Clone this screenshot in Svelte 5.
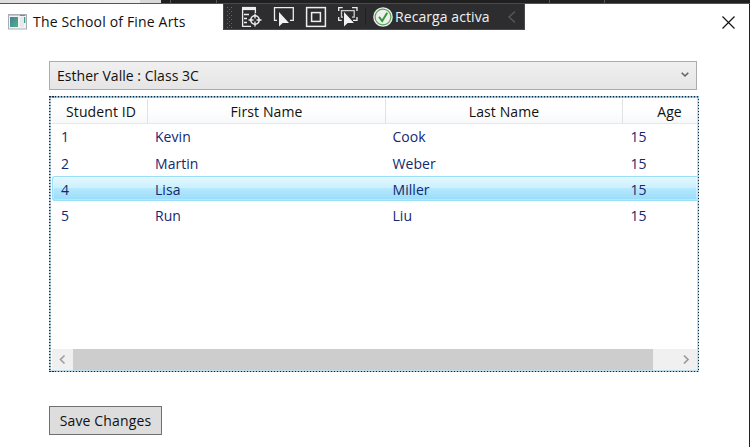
<script>
  const students = [
    { id: 1, first: 'Kevin', last: 'Cook', age: 15 },
    { id: 2, first: 'Martin', last: 'Weber', age: 15 },
    { id: 4, first: 'Lisa', last: 'Miller', age: 15 },
    { id: 5, first: 'Run', last: 'Liu', age: 15 }
  ];
  let selected = $state(4);
</script>

<div class="screen">
  <div class="backdrop"><i class="pale"></i><i class="pale2"></i><i class="tick a"></i><i class="tick b"></i><i class="tick c"></i><i class="tick d"></i></div>
  <main class="window">
    <header class="titlebar">
      <svg class="app" width="19" height="16" viewBox="0 0 19 16">
        <defs><linearGradient id="g" x2="1" y2="1"><stop stop-color="#437fa0" /><stop offset="1" stop-color="#55b080" /></linearGradient></defs>
        <rect x=".5" y=".5" width="18" height="14.5" fill="#f1f3f5" stroke="#a9adb5" />
        <path d="M1 1.5h17" stroke="#c5c8d0" /><path d="M12 1.5h5" stroke="#7b8494" />
        <rect x="2" y="3" width="8" height="10" fill="url(#g)" />
        <rect x="12" y="3" width="4" height="10" fill="#e5e9ed" /><rect x="16" y="3" width="1.3" height="6" fill="#3d9d8f" />
      </svg>
      <h1>The School of Fine Arts</h1>
      <svg class="close" width="13" height="13" viewBox="0 0 13 13"><path d="M.5.5l12 12M12.5.5l-12 12" stroke="#111" stroke-width="1.15" /></svg>
    </header>

    <section class="content">
      <button class="combo"><span>Esther Valle : Class 3C</span>
        <svg width="8" height="6" viewBox="0 0 8 6"><path d="M.7.8L4 4l3.3-3.2" fill="none" stroke="#606060" stroke-width="1.6" /></svg>
      </button>
      <div class="list">
        <div class="inner">
          <div class="row head"><span class="sid">Student ID</span><span class="fn">First Name</span><span class="ln">Last Name</span><span class="age">Age</span></div>
          <div class="rows">
            {#each students as s}
              <!-- svelte-ignore a11y_click_events_have_key_events, a11y_no_static_element_interactions -->
              <div class="row item" class:selected={s.id === selected} onclick={() => (selected = s.id)}>
                <span class="num">{s.id}</span><span>{s.first}</span><span>{s.last}</span><span class="num">{s.age}</span>
              </div>
            {/each}
          </div>
          <div class="scroll">
            <svg width="21" height="21" viewBox="0 0 21 21"><path d="M12.5 6.5l-4 4 4 4" fill="none" stroke="#a0a0a0" stroke-width="1.7" /></svg>
            <div class="thumb"></div>
            <svg width="21" height="21" viewBox="0 0 21 21"><path d="M8 6.5l4 4-4 4" fill="none" stroke="#999" stroke-width="1.7" /></svg>
          </div>
        </div>
      </div>
      <button class="save"><span>Save Changes</span></button>
    </section>
  </main>

  <aside class="debugbar">
    <svg width="302" height="27" viewBox="0 0 302 27" fill="none">
      <defs><pattern id="grip" width="4" height="4" patternUnits="userSpaceOnUse"><rect width="1" height="1" fill="#68686a" /><rect x="2" y="2" width="1" height="1" fill="#68686a" /></pattern></defs>
      <rect x="4" y="3" width="6" height="22" fill="url(#grip)" />
      <g stroke="#eeeeee" stroke-width="1.3">
        <path d="M19.6 5v18.4H28M32.4 5v5" /><path d="M19 5.5h14" stroke-width="3.2" />
        <path d="M21 11.5h5M21 15.5h3M21 19.5h3" />
        <circle cx="32" cy="17" r="4.2" stroke-width="1.6" /><path d="M32 10.5v5M32 18.5v5M25.5 17h5M33.5 17h5" />
        <path d="M54 17.3h-2.5V4.6h18.8v12.7H67" />
        <rect x="83.6" y="4.6" width="18.8" height="18.8" stroke-width="1.5" /><rect x="88.6" y="9.6" width="8.8" height="8.8" stroke-width="1.5" />
        <path d="M115.7 8V4.6h4M129 4.6h5V8M115.7 14v3.4h3M130 17.4h4V14" />
        <path d="M120 14.2h-1.5V7.6h12.7v6.6H129" stroke="#ccc" />
      </g>
      <path d="M56 9v14.5l3.7-3.6h6.3z" fill="#f1f1f1" /><path d="M121 9v14.5l3.7-3.6h6.3z" fill="#f1f1f1" />
      <path d="M142.5 5v17" stroke="#202022" />
      <circle cx="160" cy="14" r="9.8" fill="#eeeeee" /><circle cx="160" cy="14" r="7.9" stroke="#56a652" stroke-width="1.2" />
      <path d="M156 13.8l3.2 4.2 5-8.3" stroke="#36983b" stroke-width="2" />
      <path d="M292 8.5l-6 5.5 6 5.5" stroke="#5b5b5d" stroke-width="1.3" />
    </svg>
    <span>Recarga activa</span>
  </aside>
</div>

<style>
  :global(body) { margin: 0; background: #fff; overflow: hidden; }
  * { box-sizing: border-box; }
  .screen { position: relative; width: 750px; height: 447px; display: flex; flex-direction: column; font: 14px/20px "Open Sans", "Noto Sans", sans-serif; color: #111; background: #222224; }
  .backdrop { display: flex; height: 4px; background: #202021; border-bottom: 1px solid #555; position: relative; }
  .pale { width: 140px; background: linear-gradient(90deg, #ddd, #eee); }
  .pale2 { width: 21px; background: #d8d8d8; }
  .tick { position: absolute; top: 0; width: 1px; height: 3px; background: #555; }
  .a { left: 170px; } .b { left: 216px; } .c { left: 549px; } .d { left: 604px; }
  .window { width: 749px; flex: 1; background: #fff; display: flex; flex-direction: column; }
  .titlebar { display: flex; align-items: center; height: 36px; padding: 0 14.5px 0 8px; }
  h1 { font: inherit; margin: 0 auto 0 6px; letter-spacing: .17px; white-space: nowrap; }
  .app { margin-top: -1px; }
  .content { padding: 21px 0 0 49px; display: flex; flex-direction: column; align-items: flex-start; }
  button { font: inherit; color: #111; border-radius: 0; padding: 0; }
  .combo { width: 648px; height: 29px; border: 1px solid #acacac; background: linear-gradient(#f0f0f0, #e5e5e5); display: flex; align-items: center; justify-content: space-between; padding: 0 7px 0 7px; letter-spacing: .03px; }
  .combo svg { margin-top: -2px; }
  .list {
    width: 650px; height: 276px; margin-top: 6px; padding: 2px;
    background:
      repeating-linear-gradient(90deg, #1c2732 0 1.5px, #8fbbd6 1.5px 3px) 0 0 / 100% 1.5px no-repeat,
      repeating-linear-gradient(90deg, #1c2732 0 1.5px, #8fbbd6 1.5px 3px) 0 100% / 100% 1.5px no-repeat,
      repeating-linear-gradient(#1c2732 0 1.5px, #b5d3e5 1.5px 3px) 0 0 / 1.5px 100% no-repeat,
      repeating-linear-gradient(#1c2732 0 1.5px, #b5d3e5 1.5px 3px) 100% 0 / 1.5px 100% no-repeat,
      #c5dfee;
  }
  .inner { height: 100%; background: #fff; padding: 1px 0 0 1px; display: flex; flex-direction: column; }
  .row { display: grid; grid-template-columns: 96px 238px 237px 1fr; align-items: center; }
  .head { height: 25px; border-bottom: 1px solid #e3e8ea; background: linear-gradient(#fff 40%, #f7f8f9); text-align: center; letter-spacing: .1px; }
  .head span { height: 24px; line-height: 25px; border-right: 1px solid #e0e2e4; }
  .head .sid { padding-left: 3px; }
  .head .age { border: 0; padding-left: 19px; letter-spacing: 0; }
  .rows { flex: 1; margin-top: -.6px; }
  .item { height: 25px; margin-bottom: 1.3px; border: 1px solid transparent; color: #14286f; grid-template-columns: 94px 237.5px 238px 1fr; letter-spacing: .05px; }
  .item span { padding-left: 8px; line-height: 25px; height: 23px; }
  .selected { border: 1px solid #98dff9; border-right: 0; border-radius: 3px 0 0 3px; background: linear-gradient(#e5f7fe, #caf0fe 48%, #b6e8fe 50%, #98dcfa); box-shadow: inset 0 0 0 1px #ffffff55; }
  .scroll { height: 21px; background: #f0f0f0; display: flex; justify-content: space-between; }
  .thumb { width: 580px; margin-right: auto; background: #cdcdcd; }
  .save { width: 113px; height: 29px; margin-top: 34px; border: 1px solid #707070; background: #ddd; letter-spacing: .15px; }
  .debugbar { position: absolute; left: 223px; top: 3px; width: 302px; height: 27px; background: #2d2d30; color: #f1f1f1; box-shadow: inset 0 0 0 1px #4b4b4d; }
  .debugbar svg { display: block; }
  .debugbar span { position: absolute; left: 172px; top: 4px; white-space: nowrap; letter-spacing: .08px; }
</style>
